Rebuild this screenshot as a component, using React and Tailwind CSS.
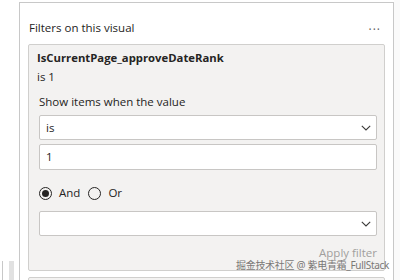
import React from "react";

const Chevron = () => (
  <svg width="10" height="6" viewBox="0 0 10 6" fill="none">
    <path d="M0.8 0.8 L5 5 L9.2 0.8" stroke="#3b3a39" strokeWidth="1.1" />
  </svg>
);

export default function App() {
  return (
    <div
      className="relative w-[400px] h-[280px] overflow-hidden bg-white flex text-[#252423]"
      style={{ fontFamily: '"Open Sans", "Noto Sans", sans-serif' }}
    >
      {/* left strip */}
      <div className="w-[19px] shrink-0 flex flex-col">
        <div className="flex-1" />
        <div className="h-[19px] shrink-0 flex">
          <div className="ml-[2px] w-px bg-[#c8c8c8]" />
          <div className="ml-[6px] w-[5px] bg-[#e1e1e1]" />
        </div>
      </div>

      {/* panel */}
      <div className="mt-[2px] w-[375px] shrink-0 border-l border-t border-r border-[#c8c8c8] flex flex-col pl-2">
        <div className="h-[41px] shrink-0 flex items-end pb-[8px] pr-3 justify-between">
          <span className="text-[11.5px] leading-[16px] pl-[1px]">Filters on this visual</span>
          <span className="text-[12px] leading-[12px] tracking-[1px] text-[#605e5c] pb-[0px]">···</span>
        </div>
        <div className="w-[357px] h-[227px] shrink-0 border border-[#d0cfcd] bg-[#f3f2f1] rounded-[2px] flex flex-col pl-2 pr-[7px] pt-[5px]">
          <div className="text-[11.3px] leading-[16px] font-bold">IsCurrentPage_approveDateRank</div>
          <div className="text-[11.5px] leading-[16px] mt-[3px]">is 1</div>
          <div className="pl-[2px] flex flex-col">
            <div className="text-[11.5px] leading-[16px] mt-[9px]">Show items when the value</div>
            <div className="mt-[5px] h-[25px] shrink-0 bg-white border border-[#c8c6c4] rounded-[2px] flex items-center justify-between pl-[6px] pr-[5px]">
              <span className="text-[11.5px] leading-[16px]">is</span>
              <Chevron />
            </div>
            <div className="mt-[4px] h-[26px] shrink-0 bg-white border border-[#c8c6c4] rounded-[2px] flex items-center pl-[6px]">
              <span className="text-[11.5px] leading-[16px]">1</span>
            </div>
            <div className="mt-[15px] h-[16px] flex items-center text-[11.5px] leading-[16px]">
              <span className="w-[13px] h-[13px] rounded-full border border-[#252423] flex items-center justify-center">
                <span className="w-[7px] h-[7px] rounded-full bg-[#252423]" />
              </span>
              <span className="ml-[7px]">And</span>
              <span className="ml-[8px] w-[13px] h-[13px] rounded-full border border-[#252423]" />
              <span className="ml-[7px]">Or</span>
            </div>
            <div className="mt-[10px] h-[25px] shrink-0 bg-white border border-[#c8c6c4] rounded-[2px] flex items-center justify-end pr-[5px]">
              <Chevron />
            </div>
            <div className="mt-[9px] flex justify-end">
              <span className="text-[11.5px] leading-[16px] text-[#a19f9d]">Apply filter</span>
            </div>
          </div>
        </div>
        <div className="mt-[6px] w-[357px] h-[20px] shrink-0 border border-[#d0cfcd] bg-[#f3f2f1] rounded-[2px]" />
      </div>

      {/* right strip */}
      <div className="flex-1 bg-[#fafafa]" />

      {/* watermark */}
      <div
        className="absolute left-[236px] top-[257px] text-[10px] leading-[16px] tracking-[-0.3px] text-[#7a7876] whitespace-nowrap"
        style={{ fontFamily: '"Noto Sans", "Noto Sans CJK SC", sans-serif' }}
      >
        掘金技术社区 @ 紫电青霜_FullStack
      </div>
    </div>
  );
}
